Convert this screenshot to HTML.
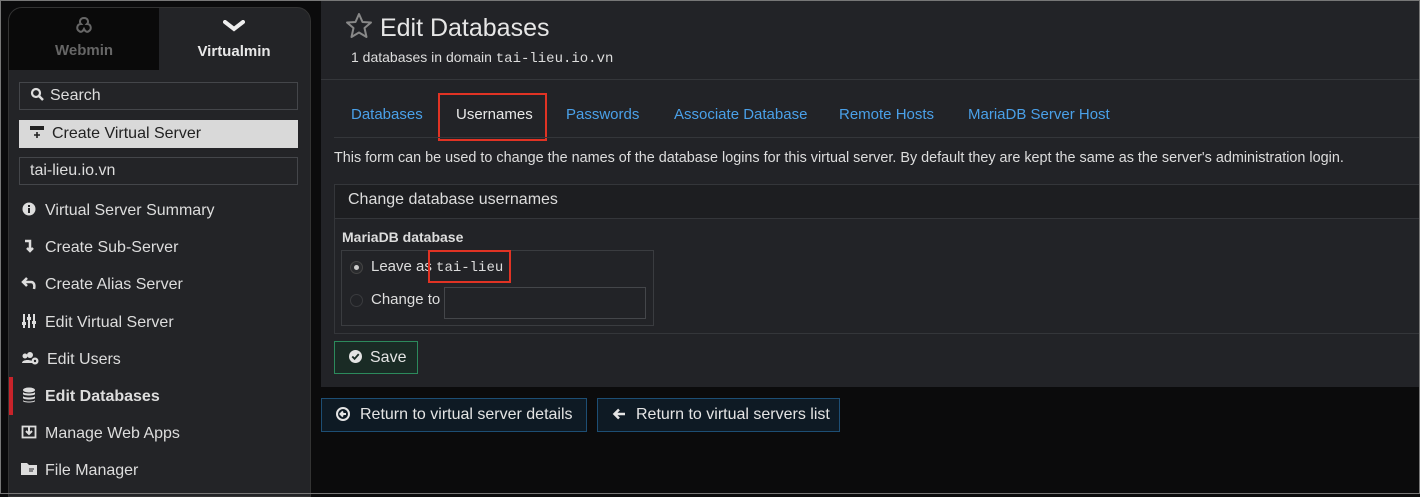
<!DOCTYPE html>
<html><head><meta charset="utf-8"><style>
*{box-sizing:border-box;margin:0;padding:0}
body{width:1420px;height:494px;background:#0b0b0c;font-family:"Liberation Sans",sans-serif;position:relative;overflow:hidden;color:#ddd;white-space:nowrap}
.frame{position:absolute;left:0;top:0;width:1420px;height:494px;border:1px solid #777;pointer-events:none}
.sb{position:absolute;left:8px;top:7px;width:303px;height:490px;background:#232427;border-radius:14px 14px 0 0;border:1px solid #333;overflow:hidden}
.tab{position:absolute;top:0;height:62px;width:150px;text-align:center;font-weight:bold;font-size:15px}
.t1{left:0;background:#0a0a0a;color:#666}
.t2{left:150px;color:#e8e8e8}
.box{position:absolute;left:10px;width:279px;height:28px;border:1px solid #44464a;font-size:16px;padding:4px 10px;color:#ddd}
.item{position:absolute;left:12px;font-size:16px;color:#ddd}
.item svg{display:inline-block;margin-right:8px;vertical-align:-2px}
.main{position:absolute;left:321px;top:0;width:1099px;height:387px;background:#222327}
.hl{position:absolute;left:0;right:0;height:1px;background:#34363a}
.tabs a{position:absolute;top:106px;font-size:15px;color:#4aa0e8;text-decoration:none}
.red{position:absolute;border:2px solid #e13324}
.btn{position:absolute;height:34px;border:1px solid #1d4e74;background:#0e1a24;color:#e4e4e4;font-size:16px;padding:7px 14px}
.btn svg{vertical-align:-2px;margin-right:10px}
</style></head><body>
<div class="sb">
 <div class="tab t1"><svg width="20" height="20" style="margin-top:8px" viewBox="0 0 20 20"><path d="M10 2 C6 2 5 6 7 8 C3 8 2 13 5 15 C7 17 9 15 10 13 C11 15 13 17 15 15 C18 13 17 8 13 8 C15 6 14 2 10 2Z" stroke="#666" stroke-width="2" fill="none"/></svg><div style="margin-top:2px">Webmin</div></div>
 <div class="tab t2"><svg width="22" height="12" style="margin-top:12px" viewBox="0 0 22 12"><path d="M2 2 L11 9 L20 2" stroke="#eee" stroke-width="4" fill="none" stroke-linecap="round"/></svg><div style="margin-top:7px">Virtualmin</div></div>
 <div class="box" style="top:74px"><svg width="14" height="14" viewBox="0 0 14 14" style="vertical-align:-1px;margin-right:6px"><circle cx="6" cy="6" r="4" stroke="#ddd" stroke-width="2.2" fill="none"/><path d="M9 9 L13 13" stroke="#ddd" stroke-width="2.5"/></svg>Search</div>
 <div class="box" style="top:112px;background:#d9d9d9;color:#222;border-color:#d9d9d9"><svg width="14" height="14" viewBox="0 0 14 14" style="vertical-align:-1px;margin:0 8px 0 0"><rect x="0" y="1" width="14" height="4" fill="#222"/><path d="M7 7 V13 M4 10 H10" stroke="#222" stroke-width="1.6"/></svg>Create Virtual Server</div>
 <div class="box" style="top:149px">tai-lieu.io.vn</div>
 <div class="item" style="top:193px"><svg width="16" height="16" viewBox="0 0 16 16"><circle cx="8" cy="8" r="6.5" fill="#ddd"/><rect x="7" y="7" width="2" height="5" fill="#232427"/><rect x="7" y="4" width="2" height="2" fill="#232427"/></svg>Virtual Server Summary</div>
 <div class="item" style="top:230px"><svg width="16" height="16" viewBox="0 0 16 16"><path d="M4 3 H9 V13 M6 10 L9 13 L12 10" stroke="#ddd" stroke-width="2.5" fill="none"/></svg>Create Sub-Server</div>
 <div class="item" style="top:267px"><svg width="16" height="16" viewBox="0 0 16 16"><path d="M6 3 L2 7 L6 11 M2 7 H10 C13 7 14 10 13 14" stroke="#ddd" stroke-width="2.5" fill="none"/></svg>Create Alias Server</div>
 <div class="item" style="top:305px"><svg width="16" height="16" viewBox="0 0 16 16"><path d="M3 1 V15 M8 1 V15 M13 1 V15" stroke="#ddd" stroke-width="2"/><rect x="1" y="9" width="4" height="3" fill="#ddd"/><rect x="6" y="4" width="4" height="3" fill="#ddd"/><rect x="11" y="8" width="4" height="3" fill="#ddd"/></svg>Edit Virtual Server</div>
 <div class="item" style="top:342px"><svg width="18" height="16" viewBox="0 0 18 16"><circle cx="4" cy="6" r="2.5" fill="#ddd"/><circle cx="9" cy="5" r="3" fill="#ddd"/><path d="M1 13 C1 9 12 9 12 13Z" fill="#ddd"/><circle cx="14" cy="11" r="3.5" fill="#ddd"/><circle cx="14" cy="11" r="1.2" fill="#232427"/></svg>Edit Users</div>
 <div style="position:absolute;left:0;top:369px;width:4px;height:38px;background:#c8232a"></div>
 <div class="item" style="top:379px;font-weight:bold"><svg width="16" height="16" viewBox="0 0 16 16"><ellipse cx="8" cy="3" rx="6" ry="2.5" fill="#ddd"/><path d="M2 5 V7 C2 9 14 9 14 7 V5 C14 7 2 7 2 5Z M2 9 V11 C2 13 14 13 14 11 V9 C14 11 2 11 2 9Z M2 13 V14 C2 16 14 16 14 14 V13 C14 15 2 15 2 13Z" fill="#ddd"/></svg>Edit Databases</div>
 <div class="item" style="top:416px"><svg width="16" height="16" viewBox="0 0 16 16"><rect x="1.5" y="2.5" width="13" height="11" stroke="#ddd" stroke-width="1.8" fill="none"/><path d="M8 3 V10 M5 7 L8 10 L11 7" stroke="#ddd" stroke-width="2" fill="none"/></svg>Manage Web Apps</div>
 <div class="item" style="top:453px"><svg width="16" height="16" viewBox="0 0 16 16"><path d="M0 2 H6 L8 4 H16 V14 H0Z" fill="#ddd"/><path d="M8 8 H13 M8 10 H12" stroke="#232427" stroke-width="1"/></svg>File Manager</div>
</div>
<div class="main">
 <div style="position:absolute;left:24px;top:12px;font-size:25px;color:#e6e6e6"><svg width="28" height="27" viewBox="0 0 28 27" style="vertical-align:-3px"><path d="M14 2 L17.5 10 L26 10.5 L19.5 16 L21.5 25 L14 20.5 L6.5 25 L8.5 16 L2 10.5 L10.5 10Z" stroke="#888" stroke-width="2" fill="none" stroke-linejoin="round"/></svg> Edit Databases</div>
 <div style="position:absolute;left:30px;top:49px;font-size:14px;color:#ddd">1 databases in domain <span style="font-family:'Liberation Mono',monospace">tai-lieu.io.vn</span></div>
 <div class="hl" style="top:79px"></div>
 <div class="tabs">
  <a style="left:30px">Databases</a>
  <a style="left:135px;color:#e8e8e8">Usernames</a>
  <a style="left:245px">Passwords</a>
  <a style="left:353px">Associate Database</a>
  <a style="left:518px">Remote Hosts</a>
  <a style="left:647px">MariaDB Server Host</a>
 </div>
 <div class="red" style="left:117px;top:93px;width:109px;height:48px"></div>
 <div class="hl" style="top:137px;left:13px"></div>
 <div style="position:absolute;left:13px;top:150px;font-size:14.4px;color:#ddd">This form can be used to change the names of the database logins for this virtual server. By default they are kept the same as the server's administration login.</div>
 <div class="hl" style="top:184px;left:13px"></div>
 <div style="position:absolute;left:13px;top:185px;right:0;height:33px;background:#1d1e21;border-left:1px solid #34363a;font-size:16px;padding:6px 13px;color:#ddd">Change database usernames</div>
 <div class="hl" style="top:218px;left:13px"></div>
 <div style="position:absolute;left:13px;top:218px;width:1px;height:115px;background:#34363a"></div>
 <div style="position:absolute;left:21px;top:229px;font-size:14px;font-weight:bold;color:#ddd">MariaDB database</div>
 <div style="position:absolute;left:20px;top:250px;width:313px;height:76px;border:1px solid #3a3c40"></div>
 <div style="position:absolute;left:29px;top:261px;width:13px;height:13px;border-radius:50%;border:1px solid #444;background:#2a2b2e"><div style="width:5px;height:5px;border-radius:50%;background:#ccc;margin:3px"></div></div>
 <div style="position:absolute;left:50px;top:258px;font-size:15px">Leave as <span style="font-family:'Liberation Mono',monospace;font-size:14px">tai-lieu</span></div>
 <div class="red" style="left:107px;top:250px;width:83px;height:33px"></div>
 <div style="position:absolute;left:29px;top:294px;width:13px;height:13px;border-radius:50%;border:1px solid #3a3b3e"></div>
 <div style="position:absolute;left:50px;top:291px;font-size:15px">Change to</div>
 <div style="position:absolute;left:123px;top:287px;width:202px;height:32px;border:1px solid #44464a"></div>
 <div class="hl" style="top:333px;left:13px"></div>
 <div style="position:absolute;left:13px;top:341px;width:84px;height:33px;border:1px solid #2c8a5c;background:#1a2b25;font-size:16px;padding:7px 14px;color:#e4e4e4"><svg width="13" height="13" viewBox="0 0 14 14" style="vertical-align:-1px;margin-right:8px"><circle cx="7" cy="7" r="7" fill="#e4e4e4"/><path d="M3.5 7 L6 9.5 L10.5 4.5" stroke="#1a2b25" stroke-width="2" fill="none"/></svg>Save</div>
</div>
<div class="btn" style="left:321px;top:398px;width:266px"><svg width="14" height="14" viewBox="0 0 14 14"><circle cx="7" cy="7" r="6" stroke="#e4e4e4" stroke-width="2" fill="none"/><path d="M10 7 H5 M7 4.5 L4.5 7 L7 9.5" stroke="#e4e4e4" stroke-width="2" fill="none"/></svg>Return to virtual server details</div>
<div class="btn" style="left:597px;top:398px;width:243px"><svg width="14" height="14" viewBox="0 0 14 14"><path d="M13 7 H3 M7 2.5 L2.5 7 L7 11.5" stroke="#e4e4e4" stroke-width="2.5" fill="none"/></svg>Return to virtual servers list</div>
<div class="frame"></div>
</body></html>
